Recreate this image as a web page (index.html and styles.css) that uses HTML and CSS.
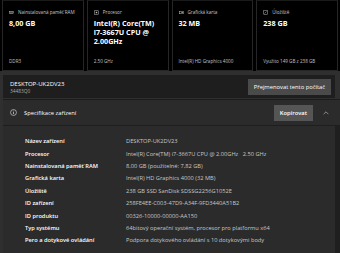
FILE: index.html
```html
<!DOCTYPE html>
<html lang="cs">
<head>
  <meta charset="UTF-8">
  <meta name="viewport" content="width=device-width, initial-scale=1.0">
  <title>Informace o systému</title>
  <link rel="stylesheet" href="styles.css">
</head>
<body>
  <div class="cards">
    <div class="card">
      <div class="cardHead">
        <svg class="cardIcon" viewBox="0 0 10 10"><rect x="1" y="3" width="8" height="4" fill="none" stroke="#bbb" stroke-width="1"/><path d="M3 3v4M5 3v4M7 3v4" stroke="#bbb" stroke-width="0.8"/></svg>
        <span>Nainstalovaná paměť RAM</span>
      </div>
      <p class="cardValue">8,00 GB</p>
      <p class="cardFoot">DDR3</p>
    </div>
    <div class="card">
      <div class="cardHead">
        <svg class="cardIcon" viewBox="0 0 10 10"><rect x="1" y="1.5" width="8" height="7" fill="none" stroke="#bbb" stroke-width="1"/><rect x="3.5" y="3.5" width="3" height="3" fill="#bbb"/></svg>
        <span>Procesor</span>
      </div>
      <p class="cardValue">Intel(R) Core(TM) i7-3667U CPU @ 2.00GHz</p>
      <p class="cardFoot">2.50 GHz</p>
    </div>
    <div class="card">
      <div class="cardHead">
        <svg class="cardIcon" viewBox="0 0 10 10"><rect x="1" y="2.5" width="8" height="5" fill="none" stroke="#bbb" stroke-width="1"/><rect x="5" y="4" width="2.5" height="2" fill="#bbb"/></svg>
        <span>Grafická karta</span>
      </div>
      <p class="cardValue">32 MB</p>
      <p class="cardFoot">Intel(R) HD Graphics 4000</p>
    </div>
    <div class="card">
      <div class="cardHead">
        <svg class="cardIcon" viewBox="0 0 10 10"><rect x="1.5" y="1" width="7" height="8" fill="none" stroke="#bbb" stroke-width="1"/><path d="M3 7l4-4" stroke="#bbb" stroke-width="1"/></svg>
        <span>Úložiště</span>
      </div>
      <p class="cardValue">238 GB</p>
      <p class="cardFoot">Využito 149 GB z 238 GB</p>
    </div>
  </div>

  <div class="frame">
    <div class="device">
      <div>
        <p class="deviceName">DESKTOP-UK2DV23</p>
        <p class="deviceId">34483Q0</p>
      </div>
      <button class="button renameButton">Přejmenovat tento počítač</button>
    </div>

    <div class="specs">
      <div class="specsHead">
        <svg class="infoIcon" viewBox="0 0 10 10"><circle cx="5" cy="5" r="4.2" fill="none" stroke="#ddd" stroke-width="0.9"/><path d="M5 4.3v3" stroke="#ddd" stroke-width="1"/><circle cx="5" cy="2.9" r="0.6" fill="#ddd"/></svg>
        <span class="specsTitle">Specifikace zařízení</span>
        <button class="button copyButton">Kopírovat</button>
        <svg class="chevron" viewBox="0 0 10 6"><path d="M1 5l4-4 4 4" fill="none" stroke="#ccc" stroke-width="1"/></svg>
      </div>
      <div class="specsList">
        <span class="label">Název zařízení</span><span class="value">DESKTOP-UK2DV23</span>
        <span class="label">Procesor</span><span class="value">Intel(R) Core(TM) i7-3667U CPU @ 2.00GHz&nbsp;&nbsp;&nbsp;2.50 GHz</span>
        <span class="label">Nainstalovaná paměť RAM</span><span class="value">8,00 GB (použitelné: 7,82 GB)</span>
        <span class="label">Grafická karta</span><span class="value">Intel(R) HD Graphics 4000 (32 MB)</span>
        <span class="label">Úložiště</span><span class="value">238 GB SSD SanDisk SDSSG2256G1052E</span>
        <span class="label">ID zařízení</span><span class="value">258FE4EE-C003-47D9-A34F-9FD3440A51B2</span>
        <span class="label">ID produktu</span><span class="value">00326-10000-00000-AA150</span>
        <span class="label">Typ systému</span><span class="value">64bitový operační systém, procesor pro platformu x64</span>
        <span class="label">Pero a dotykové ovládání</span><span class="value">Podpora dotykového ovládání s 10 dotykovými body</span>
      </div>
    </div>
  </div>
</body>
</html>
```

FILE: styles.css
```css
body, html {
  margin: 0;
  height: 253px;
  background-color: #000;
  font-family: "Open Sans", "Noto Sans", sans-serif;
  color: white;
  overflow: hidden;
}
p {
  margin: 0;
}
.cards {
  display: grid;
  grid-template-columns: repeat(4, 1fr);
  gap: 3px;
  padding: 0 2px 0 2px;
  height: 71px;
}
.card {
  display: flex;
  flex-direction: column;
  border: 1px solid #262626;
  border-top-color: #1a1a1a;
  padding: 8px 8px 6px 6px;
  box-sizing: border-box;
  background-color: #000;
  min-width: 0;
}
.cardHead {
  display: flex;
  align-items: center;
  gap: 4px;
  font-size: 4.6px;
  color: #c8c8c8;
  white-space: nowrap;
}
.cardIcon {
  width: 5px;
  height: 5px;
  flex-shrink: 0;
}
.cardValue {
  margin-top: 4px;
  font-size: 7.2px;
  line-height: 9px;
  font-weight: 700;
}
.cardFoot {
  margin-top: auto;
  font-size: 4.6px;
  color: #c0c0c0;
  white-space: nowrap;
}
.frame {
  display: flex;
  flex-direction: column;
  box-sizing: border-box;
  height: 182px;
  background-color: #2f2f2f;
  padding: 4px 0 0 3px;
}
.device {
  display: flex;
  justify-content: space-between;
  align-items: center;
  flex-shrink: 0;
  background-color: #1e1e1e;
  height: 23px;
  margin-right: 5px;
  padding: 0 4px 0 7px;
}
.deviceName {
  font-size: 6px;
  line-height: 8px;
}
.deviceId {
  font-size: 4.8px;
  color: #aaa;
}
.button {
  border: none;
  color: white;
  font-family: "Open Sans", "Noto Sans", sans-serif;
  cursor: pointer;
}
.renameButton {
  background-color: #4a4a4a;
  font-size: 5.8px;
  padding: 4px 6px;
}
.specs {
  display: flex;
  flex-direction: column;
  flex: 1;
  min-height: 0;
  margin-top: 1px;
  border-top: 1px solid #1c1c1c;
  background-color: #2b2b2b;
}
.specsHead {
  display: flex;
  align-items: center;
  flex-shrink: 0;
  height: 25px;
  padding: 0 11px 0 7px;
  border-bottom: 1px solid #1e1e1e;
}
.infoIcon {
  width: 7px;
  height: 7px;
}
.specsTitle {
  margin-left: 7px;
  font-size: 5.8px;
  flex: 1;
}
.copyButton {
  background-color: #555;
  font-size: 5.8px;
  font-weight: 600;
  padding: 4px 6px;
}
.chevron {
  width: 6px;
  height: 4px;
  margin-left: 10px;
}
.specsList {
  display: grid;
  grid-template-columns: 101px 1fr;
  grid-auto-rows: 12.4px;
  align-items: center;
  flex: 1;
  min-height: 0;
  overflow: hidden;
  padding: 9px 0 0 22px;
  border-right: 5px solid #1f1f1f;
  font-size: 5.7px;
}
.label {
  font-weight: 600;
}
.value {
  color: #c8c8c8;
  white-space: nowrap;
}
```
